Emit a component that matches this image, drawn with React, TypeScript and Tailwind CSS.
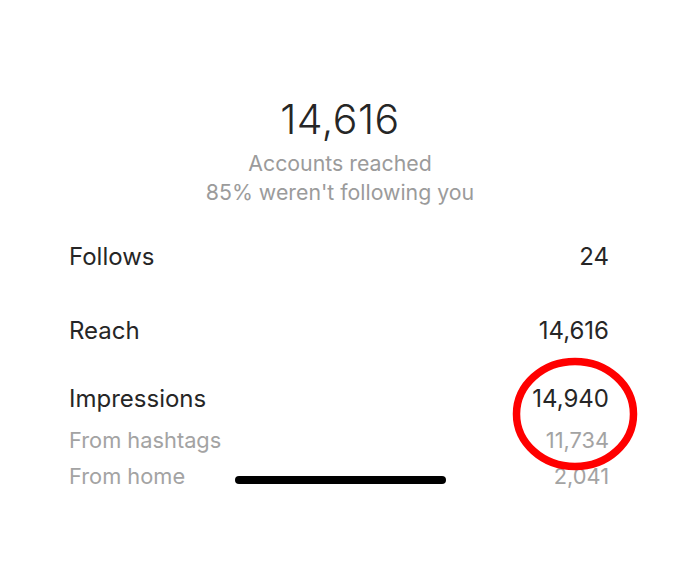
import React from "react";

export default function App() {
  const font = { fontFamily: "Inter, 'Noto Sans', sans-serif" };
  return (
    <div className="relative w-[680px] h-[571px] bg-white overflow-hidden" style={font}>
      <div className="flex flex-col items-center pt-[93px]">
        <div className="text-[41px] leading-[52px] text-[#262626] font-light tracking-[0.5px]">14,616</div>
        <div className="text-[21.3px] leading-[36px] text-[#9b9b9b]">Accounts reached</div>
        <div className="text-[21.3px] leading-[22px] text-[#9b9b9b]">85% weren't following you</div>
      </div>
      <div className="flex flex-col pl-[69px] pr-[71px] mt-[36px]">
        <div className="flex justify-between text-[24px] leading-[36px] text-[#262626]">
          <span>Follows</span>
          <span>24</span>
        </div>
        <div className="flex justify-between text-[24px] leading-[36px] text-[#262626] mt-[38px]">
          <span>Reach</span>
          <span>14,616</span>
        </div>
        <div className="flex justify-between text-[24px] leading-[36px] text-[#262626] mt-[32px]">
          <span>Impressions</span>
          <span>14,940</span>
        </div>
        <div className="flex justify-between text-[21.8px] leading-[30px] text-[#a3a3a3] mt-[8px]">
          <span>From hashtags</span>
          <span>11,734</span>
        </div>
        <div className="flex justify-between text-[21.8px] leading-[30px] text-[#a3a3a3] mt-[6px]">
          <span>From home</span>
          <span>2,041</span>
        </div>
      </div>
      <svg className="absolute left-[505px] top-[350px]" width="140" height="128" viewBox="0 0 140 128">
        <ellipse cx="70" cy="64" rx="58.5" ry="52.5" fill="none" stroke="#ff0000" strokeWidth="7.5" />
      </svg>
      <div className="absolute left-[235px] top-[476px] w-[211px] h-[8px] rounded-full bg-black" />
    </div>
  );
}
